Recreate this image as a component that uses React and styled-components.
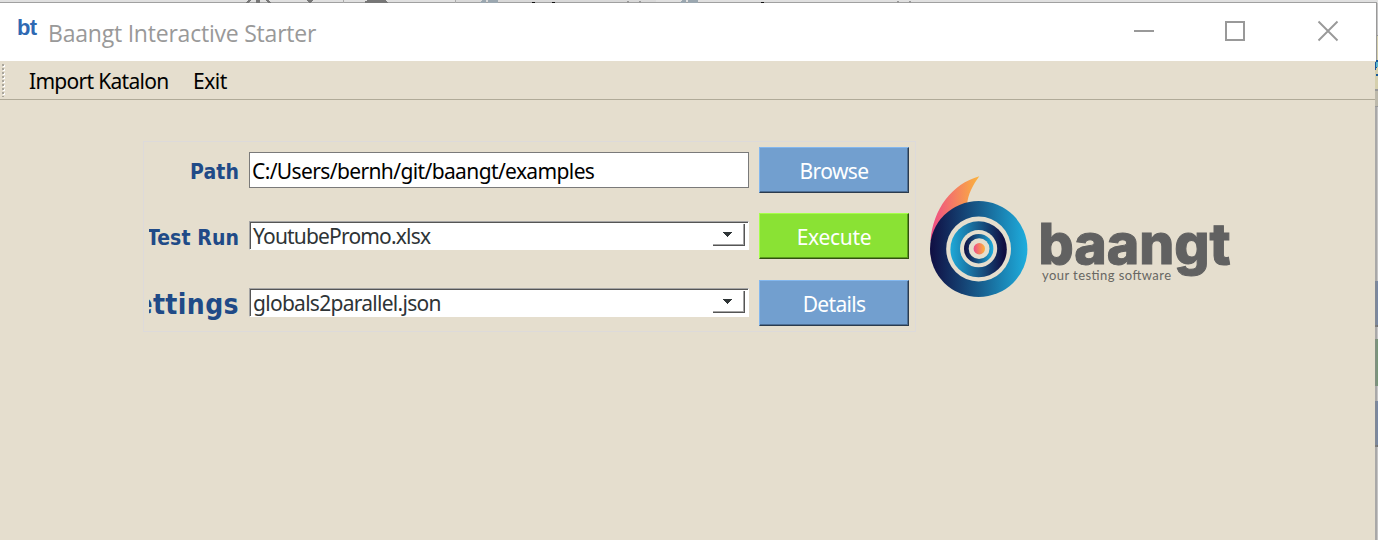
import React from "react";
import styled, { createGlobalStyle } from "styled-components";

const GlobalStyle = createGlobalStyle`
  * { box-sizing: border-box; }
  html, body { margin: 0; height: 540px; overflow: hidden; }
  body { background: #e0e0e0; }
  #root { height: 540px; }
`;

const Desktop = styled.div`
  width: 1378px;
  height: 540px;
  overflow: hidden;
  display: grid;
  grid-template-columns: 1375px 3px;
  grid-template-rows: 3px 537px;
  font-family: "Noto Sans", "DejaVu Sans", sans-serif;
`;

const Backdrop = styled.svg`
  display: block;
  ${(p) => (p.$wide ? "grid-column: 1 / 3;" : "")}
`;

const Window = styled.main`
  background: #e5dece;
  display: flex;
  flex-direction: column;
`;

const TitleBar = styled.header`
  height: 58px;
  background: #fff;
  display: flex;
  align-items: flex-start;
  justify-content: space-between;
`;

const TitleGroup = styled.div`
  display: flex;
  padding-left: 17px;
`;

const AppMark = styled.span`
  width: 31px;
  padding-top: 13px;
  font: bold 22px/24px "Liberation Sans", sans-serif;
  letter-spacing: -0.8px;
  color: #2f69b3;
`;

const Title = styled.h1`
  margin: 0;
  padding-top: 15px;
  font: 400 23px/30px "Open Sans", sans-serif;
  letter-spacing: ${(p) => p.$spacing}px;
  white-space: nowrap;
  color: #999;
`;

const WindowControls = styled.svg`
  display: block;
  width: 245px;
  height: 58px;
`;

const ToolBar = styled.nav`
  height: 39px;
  border-bottom: 1px solid #b0aa98;
  display: flex;
  align-items: center;
`;

const Grip = styled.svg`
  width: 6px;
  height: 34px;
  display: block;
`;

const ToolItem = styled.span`
  margin-left: ${(p) => p.$gap}px;
  width: ${(p) => p.$width}px;
  font-size: 21px;
  line-height: 30px;
  padding-top: 1px;
  letter-spacing: ${(p) => p.$spacing}px;
  white-space: nowrap;
  color: #000;
`;

const Content = styled.section`
  padding: 41px 0 0 143px;
  display: flex;
  align-items: flex-start;
`;

const Form = styled.div`
  width: 773px;
  padding: 5px;
  border: 1px solid #dddada;
  display: flex;
  flex-direction: column;
`;

const Row = styled.div`
  display: grid;
  grid-template-columns: 90px 500px 150px;
  column-gap: 10px;
  align-items: center;
  height: 46px;
  margin-bottom: ${(p) => p.$after || 0}px;
`;

const Label = styled.label`
  display: flex;
  justify-content: flex-end;
  overflow: hidden;
  font-family: "DejaVu Sans Condensed", "DejaVu Sans", sans-serif;
  font-stretch: condensed;
  font-weight: 700;
  font-size: ${(p) => (p.$large ? 28 : 21)}px;
  line-height: 40px;
  letter-spacing: ${(p) => p.$spacing}px;
  padding-top: 3px;
  white-space: nowrap;
  color: #204a87;
`;

const TextField = styled.div`
  height: 36px;
  border: 1px solid #7a7a7a;
  background: #fff;
  padding: 3px 0 0 2px;
  font-size: 21px;
  line-height: 30px;
  letter-spacing: ${(p) => p.$spacing}px;
  color: #000;
`;

const Combo = styled.div`
  height: 29px;
  margin-top: ${(p) => p.$shift}px;
  background: #fff;
  border: 1px solid #fff;
  border-top-color: #a5a5a5;
  border-left-color: #a5a5a5;
  box-shadow: inset 1px 1px 0 #555;
  padding: 0 3px 0 3px;
  display: flex;
  justify-content: space-between;
  font-size: 21px;
  line-height: 29px;
  letter-spacing: ${(p) => p.$spacing}px;
  color: #2e3436;
`;

const DropButton = styled.span`
  width: 32px;
  height: 22px;
  margin-top: 2px;
  border-right: 1px solid #555;
  border-bottom: 1px solid #555;
  box-shadow: inset -1px -1px 0 #a5a5a5;
  display: flex;
  justify-content: center;
  padding: 8px 2px 0 0;
`;

const tones = {
  blue: { face: "#729fcf", light: "#83b7ee", shade: "#4d6e94", dark: "#2b3b4d" },
  green: { face: "#8ae234", light: "#a5ff49", shade: "#5a9a1e", dark: "#30500f" },
};

const Button = styled.button`
  height: 46px;
  border: 1px solid ${(p) => tones[p.$tone].light};
  border-right-color: ${(p) => tones[p.$tone].dark};
  border-bottom-color: ${(p) => tones[p.$tone].dark};
  box-shadow: inset -1px -1px 0 ${(p) => tones[p.$tone].shade};
  background: ${(p) => tones[p.$tone].face};
  color: #fff;
  padding: 1px 0 0;
  font: 400 21px/30px "Noto Sans", sans-serif;
  letter-spacing: ${(p) => p.$spacing}px;
`;

const Logo = styled.svg`
  display: block;
  margin: 24px 0 0 4px;
  width: 320px;
  height: 140px;
`;

function Arrow() {
  return (
    <svg width="10" height="5" viewBox="0 0 10 5" shapeRendering="crispEdges">
      <path d="M0 0H9V1H8V2H7V3H6V4H5V5H4V4H3V3H2V2H1V1H0Z" fill="#2e3436" />
    </svg>
  );
}

function Select({ value, spacing, shift }) {
  return (
    <Combo $spacing={spacing} $shift={shift}>
      <span>{value}</span>
      <DropButton><Arrow /></DropButton>
    </Combo>
  );
}

function BaangtLogo() {
  return (
    <Logo viewBox="0 0 320 140">
      <defs>
        <linearGradient id="outer"><stop offset="0" stopColor="#100e42" /><stop offset=".5" stopColor="#175b8b" /><stop offset="1" stopColor="#1eaede" /></linearGradient>
        <linearGradient id="middle"><stop offset="0" stopColor="#1ea9d8" /><stop offset=".5" stopColor="#175b8b" /><stop offset=".95" stopColor="#100e42" /></linearGradient>
        <linearGradient id="warm"><stop offset="0" stopColor="#ee4a87" /><stop offset="1" stopColor="#fbb43c" /></linearGradient>
      </defs>
      <path d="M10.5 76C13 44 32 19 59.3 11.3C53 20 48 29 47 40L28 62Z" fill="url(#warm)" />
      <ellipse cx="58.7" cy="84" rx="48.7" ry="48" fill="url(#outer)" />
      <circle cx="58.6" cy="84" r="32.4" fill="#e5dece" />
      <ellipse cx="58.6" cy="84.3" rx="28.2" ry="28" fill="url(#middle)" />
      <circle cx="58.6" cy="83.7" r="18.6" fill="#e5dece" />
      <circle cx="58.7" cy="83.7" r="14.7" fill="url(#outer)" />
      <circle cx="59.1" cy="83.7" r="10.4" fill="#e5dece" />
      <circle cx="59.3" cy="83.7" r="5.7" fill="url(#warm)" />
      <text x="118.5" y="99" textLength="192" lengthAdjust="spacingAndGlyphs" fontFamily="Inter, sans-serif" fontWeight="800" fontSize="56" fill="#616161" stroke="#616161" strokeWidth="1">baangt</text>
      <text x="122" y="114.5" textLength="129" fontFamily="Lato, sans-serif" fontSize="13" fill="#686763">your testing software</text>
    </Logo>
  );
}

function TopBackdrop() {
  return (
    <Backdrop $wide width="1378" height="3" viewBox="0 0 1378 3" shapeRendering="crispEdges">
      <rect width="1378" height="3" fill="#e0e0e0" />
      <rect x="455" width="201" height="2" fill="#d9d9d9" />
      <rect y="2" width="1377" height="1" fill="#a0a0a0" />
      <path d="M245 3l3-3h3l-3 3zM256 0h4v3h-4zM265 0h3l3 3h-3zM306 0h8l-4 3zM365 3v-2l3-1h17l3 3z" fill="#777" />
      <path d="M343 0h1v3h-1zM455 0h1v3h-1z" fill="#aaa" />
      <path d="M479 3l4-3h3v3zM488 0h10v3h-10zM679 3l4-3h3v3zM688 0h10v3h-10z" fill="#9ba7b0" />
      <path d="M532 2h3v1h-3zM552 2h3v1h-3zM761 2h3v1h-3z" fill="#111" />
      <path d="M627 1h2v2h-2zM639 1h2v2h-2zM897 1h2v2h-2zM909 1h2v2h-2z" fill="#999" />
    </Backdrop>
  );
}

function SideBackdrop() {
  return (
    <Backdrop width="3" height="537" viewBox="0 3 3 537" shapeRendering="crispEdges">
      <rect y="3" width="3" height="537" fill="#c5c4c4" />
      <rect y="36" width="3" height="54" fill="#d5cfad" />
      <rect y="90" width="3" height="16" fill="#bdb9ab" />
      <path d="M0 35h3v1H0zM0 89h3v2H0zM0 106h3v1H0z" fill="#999" />
      <path d="M1 60h2v2H2v6H1v2H0v-8h1zM1 74h2v2H1z" fill="#17579a" />
      <rect x="1" y="62" width="2" height="5" fill="#5db7ce" />
      <rect y="281" width="3" height="45" fill="#7989a5" />
      <rect y="325" width="3" height="2" fill="#747474" />
      <rect y="339" width="3" height="47" fill="#799778" />
      <rect y="401" width="3" height="45" fill="#7989a5" />
      <rect y="445" width="3" height="2" fill="#747474" />
      <rect y="107" width="2" height="433" fill="#888" opacity=".45" />
      <rect x="1" y="3" width="1" height="57" fill="#999" />
      <rect y="3" width="1" height="58" fill="#fff" />
    </Backdrop>
  );
}

export default function App() {
  return (
    <>
      <GlobalStyle />
      <Desktop>
        <TopBackdrop />
        <Window>
          <TitleBar>
            <TitleGroup>
              <AppMark>bt</AppMark>
              <Title $spacing={-0.22}>Baangt Interactive Starter</Title>
            </TitleGroup>
            <WindowControls viewBox="0 0 245 58" fill="none" stroke="#999" strokeWidth="2">
              <path d="M4 28H24M96 19H114V37H96Z" shapeRendering="crispEdges" />
              <path d="M188.5 18.5L207.5 37.5M207.5 18.5L188.5 37.5" strokeWidth="1.9" />
            </WindowControls>
          </TitleBar>
          <ToolBar>
            <Grip viewBox="0 0 6 34" shapeRendering="crispEdges">
              <path d="M4 2V34" stroke="#fff" strokeWidth="2" strokeDasharray="2 2" />
              <path d="M3 1V34" stroke="#aaa69c" strokeWidth="2" strokeDasharray="2 2" />
            </Grip>
            <ToolItem $gap={23} $width={141} $spacing={-0.7}>Import Katalon</ToolItem>
            <ToolItem $gap={23} $width={50} $spacing={-0.5}>Exit</ToolItem>
          </ToolBar>
          <Content>
            <Form>
              <Row $after={20}>
                <Label $spacing={0.1}>Path</Label>
                <TextField $spacing={-0.62}>C:/Users/bernh/git/baangt/examples</TextField>
                <Button $tone="blue" $spacing={-0.6}>Browse</Button>
              </Row>
              <Row $after={21}>
                <Label $spacing={0.1}>Test Run</Label>
                <Select value="YoutubePromo.xlsx" spacing={-0.82} shift={-1} />
                <Button $tone="green" $spacing={-0.3}>Execute</Button>
              </Row>
              <Row>
                <Label $large $spacing={0.4}>Settings</Label>
                <Select value="globals2parallel.json" spacing={-0.72} shift={-1} />
                <Button $tone="blue" $spacing={-0.7}>Details</Button>
              </Row>
            </Form>
            <BaangtLogo />
          </Content>
        </Window>
        <SideBackdrop />
      </Desktop>
    </>
  );
}
